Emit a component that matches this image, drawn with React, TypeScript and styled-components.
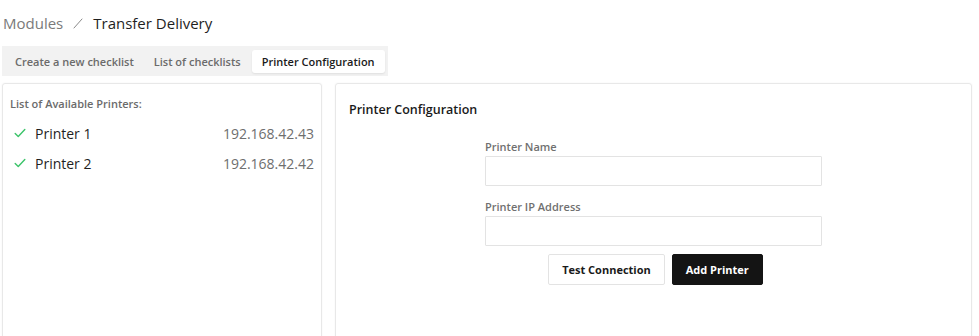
import React from 'react';
import styled, { createGlobalStyle } from 'styled-components';

const GlobalStyle = createGlobalStyle`
  html, body {
    margin: 0;
    padding: 0;
    background: #ffffff;
    font-family: "Open Sans", "Noto Sans", sans-serif;
  }
`;

const Page = styled.div`
  width: 979px;
  height: 336px;
  overflow: hidden;
  padding: 0 7px 0 2px;
  box-sizing: border-box;
`;

const Breadcrumb = styled.div`
  display: flex;
  align-items: center;
  gap: 9px;
  height: 46px;
  padding-left: 1px;
  font-size: 15px;
  color: #1f1f1f;
`;

const Crumb = styled.span<{ $muted?: boolean }>`
  color: ${(p) => (p.$muted ? '#7a7a7a' : '#1f1f1f')};
`;

const Slash = styled.svg`
  width: 12px;
  height: 12px;
`;

const TabBar = styled.div`
  display: inline-flex;
  align-items: center;
  gap: 2px;
  background: #f2f2f2;
  padding: 3px 3px 3px 4px;
  height: 30px;
  box-sizing: border-box;
`;

const Tab = styled.div<{ $active?: boolean }>`
  padding: 0 ${(p) => (p.$active ? '10px' : '9px')};
  height: 23px;
  display: flex;
  align-items: center;
  font-size: 11px;
  font-weight: 600;
  border-radius: 3px;
  color: ${(p) => (p.$active ? '#1a1a1a' : '#6b6b6b')};
  background: ${(p) => (p.$active ? '#ffffff' : 'transparent')};
  box-shadow: ${(p) => (p.$active ? '0 1px 2px rgba(0,0,0,0.08)' : 'none')};
`;

const Panels = styled.div`
  display: grid;
  grid-template-columns: 320px 1fr;
  gap: 13px;
  margin-top: 7px;
`;

const Card = styled.div`
  border: 1px solid #e8e8e8;
  border-radius: 3px;
  box-shadow: 0 0 2px rgba(0,0,0,0.06);
  height: 270px;
  box-sizing: border-box;
`;

const ListCard = styled(Card)`
  padding: 12px 7px 0 7px;
`;

const ListTitle = styled.div`
  font-size: 11px;
  font-weight: 600;
  color: #6b6b6b;
  margin-bottom: 7px;
`;

const PrinterRow = styled.div`
  display: flex;
  align-items: center;
  height: 30px;
  font-size: 14px;
`;

const Check = styled.svg`
  width: 14px;
  height: 14px;
  margin: 0 8px 0 3px;
`;

const PrinterName = styled.span`
  color: #1f1f1f;
  flex: 1;
`;

const PrinterIp = styled.span`
  color: #6e6e6e;
`;

const ConfigCard = styled(Card)`
  padding: 17px 13px 0 13px;
`;

const ConfigTitle = styled.div`
  font-size: 12.5px;
  font-weight: 600;
  color: #1a1a1a;
`;

const Form = styled.div`
  width: 337px;
  margin: 21px auto 0;
  display: flex;
  flex-direction: column;
`;

const Label = styled.label`
  font-size: 11px;
  font-weight: 600;
  color: #707070;
  margin-bottom: 2px;
  line-height: 15px;
`;

const Input = styled.input`
  height: 30px;
  box-sizing: border-box;
  border: 1px solid #e3e3e3;
  border-radius: 1px;
  margin-bottom: 13px;
  font-family: inherit;
  outline: none;
`;

const Actions = styled.div`
  display: flex;
  justify-content: center;
  gap: 7px;
  margin-top: -5px;
  padding-left: 4px;
`;

const Button = styled.button<{ $primary?: boolean }>`
  height: 31px;
  padding: 0 13px;
  font-family: inherit;
  font-size: 11px;
  font-weight: 700;
  border-radius: 2px;
  border: 1px solid ${(p) => (p.$primary ? '#141414' : '#e3e3e3')};
  background: ${(p) => (p.$primary ? '#141414' : '#ffffff')};
  color: ${(p) => (p.$primary ? '#ffffff' : '#1a1a1a')};
`;

const printers = [
  { name: 'Printer 1', ip: '192.168.42.43' },
  { name: 'Printer 2', ip: '192.168.42.42' },
];

export default function App() {
  return (
    <Page>
      <GlobalStyle />
      <Breadcrumb>
        <Crumb $muted>Modules</Crumb>
        <Slash viewBox="0 0 12 12">
          <path d="M2 11 L10 2" stroke="#8a8a8a" strokeWidth="1" strokeLinecap="round" />
        </Slash>
        <Crumb>Transfer Delivery</Crumb>
      </Breadcrumb>
      <TabBar>
        <Tab>Create a new checklist</Tab>
        <Tab>List of checklists</Tab>
        <Tab $active>Printer Configuration</Tab>
      </TabBar>
      <Panels>
        <ListCard>
          <ListTitle>List of Available Printers:</ListTitle>
          {printers.map((p) => (
            <PrinterRow key={p.name}>
              <Check viewBox="0 0 16 16" fill="none" stroke="#3cc46a" strokeWidth="1.6" strokeLinecap="round" strokeLinejoin="round">
                <path d="M2.5 8.5 L6 12 L13.5 4" />
              </Check>
              <PrinterName>{p.name}</PrinterName>
              <PrinterIp>{p.ip}</PrinterIp>
            </PrinterRow>
          ))}
        </ListCard>
        <ConfigCard>
          <ConfigTitle>Printer Configuration</ConfigTitle>
          <Form>
            <Label>Printer Name</Label>
            <Input />
            <Label>Printer IP Address</Label>
            <Input />
            <Actions>
              <Button>Test Connection</Button>
              <Button $primary>Add Printer</Button>
            </Actions>
          </Form>
        </ConfigCard>
      </Panels>
    </Page>
  );
}
